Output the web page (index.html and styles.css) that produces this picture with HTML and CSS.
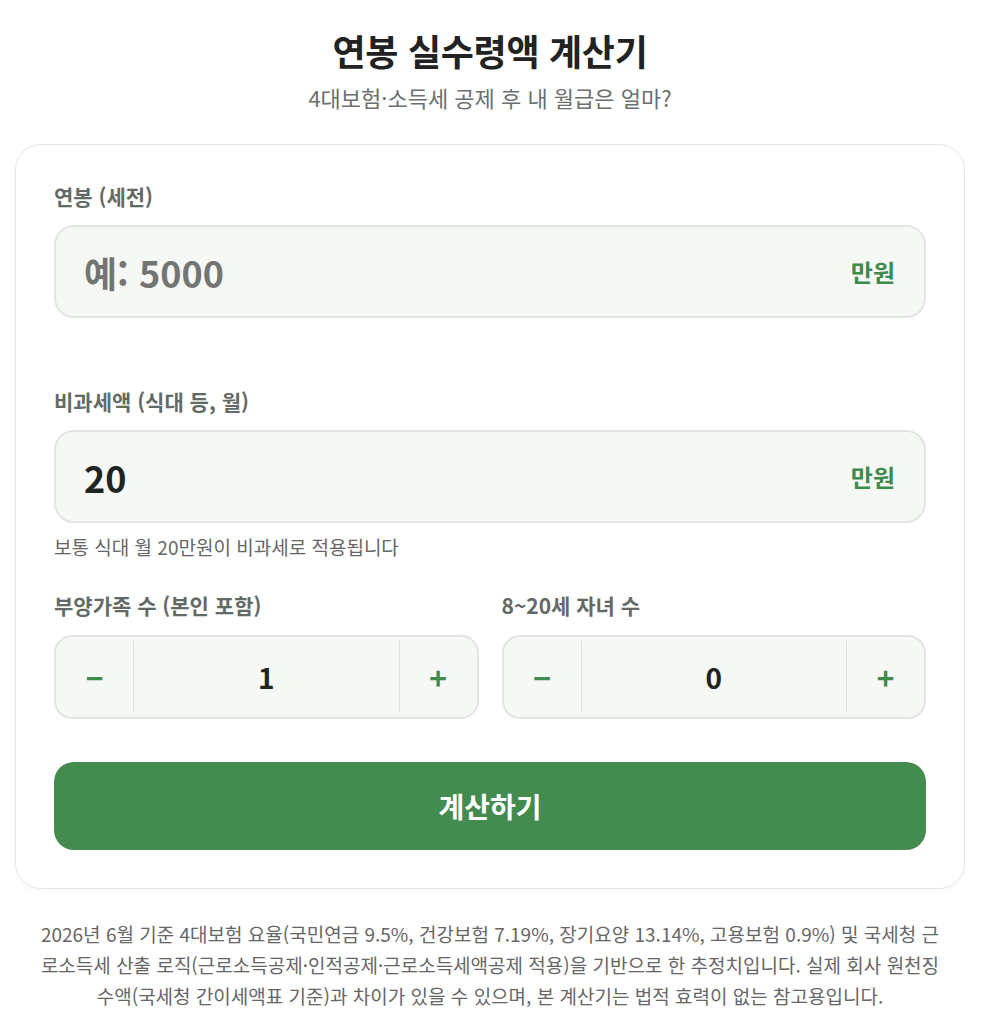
FILE: index.html
```html
<!DOCTYPE html>
<html lang="ko">
  <head>
    <meta charset="UTF-8" />
    <meta name="viewport" content="width=device-width, initial-scale=1.0" />
    <title>연봉 실수령액 계산기</title>
    <link rel="stylesheet" href="styles.css">
  </head>
  <body>
    <div class="page">
      <header class="header">
        <h1 class="title">연봉 실수령액 계산기</h1>
        <p class="subtitle">4대보험·소득세 공제 후 내 월급은 얼마?</p>
      </header>

      <div class="card">
        <div class="field field-salary">
          <label class="label" for="salary">연봉 (세전)</label>
          <div class="input-box">
            <input id="salary" class="input" type="text" placeholder="예: 5000">
            <span class="unit">만원</span>
          </div>
        </div>

        <div class="field">
          <label class="label" for="nontax">비과세액 (식대 등, 월)</label>
          <div class="input-box">
            <input id="nontax" class="input" type="text" value="20">
            <span class="unit">만원</span>
          </div>
          <div class="hint">보통 식대 월 20만원이 비과세로 적용됩니다</div>
        </div>

        <div class="stepper-row">
          <div class="stepper-field">
            <div class="label">부양가족 수 (본인 포함)</div>
            <div class="stepper">
              <button class="step-btn">−</button>
              <div class="step-value">1</div>
              <button class="step-btn">+</button>
            </div>
          </div>
          <div class="stepper-field">
            <div class="label">8~20세 자녀 수</div>
            <div class="stepper">
              <button class="step-btn">−</button>
              <div class="step-value">0</div>
              <button class="step-btn">+</button>
            </div>
          </div>
        </div>

        <button class="calc-btn">계산하기</button>
      </div>

      <p class="notice">2026년 6월 기준 4대보험 요율(국민연금 9.5%, 건강보험 7.19%, 장기요양 13.14%, 고용보험 0.9%) 및 국세청 근로소득세 산출 로직(근로소득공제·인적공제·근로소득세액공제 적용)을 기반으로 한 추정치입니다. 실제 회사 원천징수액(국세청 간이세액표 기준)과 차이가 있을 수 있으며, 본 계산기는 법적 효력이 없는 참고용입니다.</p>
    </div>
  </body>
</html>
```

FILE: styles.css
```css
body, html {
    margin: 0;
    padding: 0;
    background-color: #fff;
    font-family: "Noto Sans CJK KR", "Noto Sans", sans-serif;
    color: #222;
}

.page {
    padding: 0 20px 0 15px;
}

.header {
    text-align: center;
    padding-top: 27px;
}

.title {
    margin: 0;
    font-size: 36px;
    line-height: 46px;
    font-weight: 700;
    color: #222;
    letter-spacing: -0.3px;
}

.subtitle {
    margin: 9px 0 0;
    font-size: 22px;
    line-height: 30px;
    color: #6b6f6d;
}

.card {
    margin-top: 32px;
    border: 1px solid #e4e7e4;
    border-radius: 26px;
    padding: 39px 38px 38px;
    box-shadow: 0 2px 6px rgba(0, 0, 0, 0.03);
}

.label {
    display: block;
    font-size: 21px;
    line-height: 24px;
    font-weight: 700;
    color: #636a66;
    margin-bottom: 17px;
}

.field-salary {
    margin-bottom: 71px;
}

.input-box {
    display: flex;
    align-items: center;
    height: 89px;
    border: 2px solid #e2e6e1;
    border-radius: 20px;
    background-color: #f6f8f5;
    padding: 0 29px 0 28px;
}

.input {
    flex: 1;
    border: none;
    outline: none;
    background: transparent;
    font-family: inherit;
    font-size: 36px;
    font-weight: 700;
    color: #1f2421;
    padding: 0;
    min-width: 0;
}

.input::placeholder {
    color: #737573;
}

.unit {
    font-size: 24px;
    font-weight: 700;
    color: #3f8a4d;
}

.hint {
    margin-top: 12px;
    font-size: 19px;
    line-height: 24px;
    color: #666;
}

.stepper-row {
    display: flex;
    gap: 23px;
    margin-top: 34px;
}

.stepper-field {
    flex: 1;
}

.stepper-field .label {
    margin-bottom: 18px;
}

.stepper {
    display: flex;
    height: 80px;
    border: 2px solid #e2e6e1;
    border-radius: 18px;
    background-color: #f6f8f5;
    overflow: hidden;
}

.step-btn {
    width: 77px;
    border: none;
    background: transparent;
    font-family: inherit;
    font-size: 30px;
    font-weight: 700;
    color: #3f8a4d;
    padding: 0;
}

.step-value {
    flex: 1;
    display: flex;
    align-items: center;
    justify-content: center;
    border-left: 1px solid #dde1dc;
    border-right: 1px solid #dde1dc;
    margin: 4px 0;
    font-size: 28px;
    font-weight: 700;
    color: #1f2421;
}

.calc-btn {
    display: block;
    width: 100%;
    height: 88px;
    margin-top: 43px;
    border: none;
    border-radius: 20px;
    background-color: #448b4f;
    color: #fff;
    font-family: inherit;
    font-size: 28px;
    font-weight: 700;
}

.notice {
    margin: 29px 0 0;
    padding: 0 22px;
    text-align: center;
    font-size: 19px;
    line-height: 31px;
    color: #666;
}
```
